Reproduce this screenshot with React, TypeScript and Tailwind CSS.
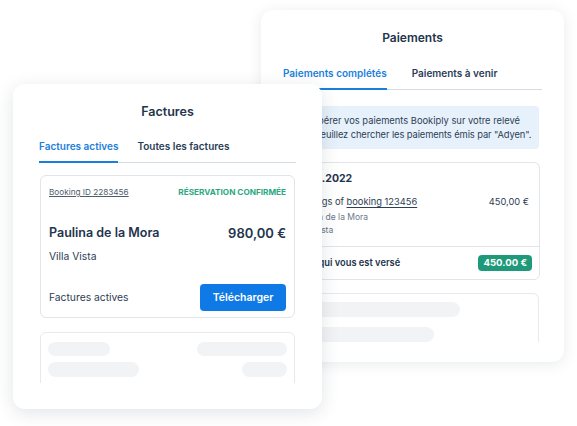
import React from "react";

export default function App() {
  return (
    <div
      className="relative w-[577px] h-[426px] bg-white overflow-hidden text-[#23344d] whitespace-nowrap"
      style={{ fontFamily: "Inter, 'Noto Sans', sans-serif" }}
    >
      {/* Back card: Paiements */}
      <div className="absolute left-[261px] top-[10px] w-[303px] h-[352px] rounded-[12px] bg-white shadow-[0_2px_14px_rgba(30,45,70,0.10)] flex flex-col px-[22px] pt-[20px]">
        <div className="text-center text-[12px] font-semibold leading-[16px]">Paiements</div>
        <div className="mt-[21px] flex border-b border-[#d5dbe3] text-[10px] font-semibold leading-[13px]">
          <div className="pb-[8px] text-[#1a7fdc] border-b-2 border-[#1a7fdc] -mb-px">
            Paiements complétés
          </div>
          <div className="pb-[8px] ml-[25px] text-[#2a3d57]">Paiements à venir</div>
        </div>
        <div className="mt-[16px] -ml-[14px] mr-[3px] h-[43px] rounded-[4px] bg-[#e7f1fb] pt-[8px] text-[9.35px] leading-[14px] text-[#2d3e55]">
          <div className="pl-[17px]">Pour repérer vos paiements Bookiply sur votre relevé</div>
          <div className="pl-[4px] tracking-[-0.1px]">bancaire, veuillez chercher les paiements émis par "Adyen".</div>
        </div>
        <div className="mt-[13px] mr-[2px] rounded-[6px] border border-[#e1e5ea]">
          <div className="px-[10px] pt-[9px] pb-[9px]">
            <div className="text-[10.5px] font-bold leading-[14px]">15.06.2022</div>
            <div className="mt-[9px] flex text-[9.3px] leading-[13px] text-[#2d3e55]">
              <span>
                Earnings of <span className="underline underline-offset-2">booking 123456</span>
              </span>
              <span className="ml-auto">450,00 €</span>
            </div>
            <div className="mt-[3px] text-[8.5px] leading-[13px] text-[#6a7888]">Paulina de la Mora</div>
            <div className="text-[8.5px] leading-[13px] text-[#6a7888]">Villa Vista</div>
          </div>
          <div className="border-t border-[#e1e5ea] flex items-center h-[33px] pl-[10px] pr-[7px]">
            <span className="text-[9.3px] font-semibold">Total qui vous est versé</span>
            <span className="ml-auto h-[16px] px-[5px] rounded-[4px] bg-[#1e9a7a] text-white text-[9.6px] font-bold leading-[16px]">
              450.00 €
            </span>
          </div>
        </div>
        <div className="mt-[13px] h-[49px] overflow-hidden mr-[3px]">
          <div className="h-[80px] rounded-[6px] border border-[#e6e9ee] px-[10px] pt-[8px] flex flex-col gap-[10px]">
            <div className="h-[15px] w-[166px] rounded-full bg-[#f2f3f5]" />
            <div className="h-[15px] w-[140px] rounded-full bg-[#f2f3f5]" />
          </div>
        </div>
      </div>

      {/* Front card: Factures */}
      <div className="absolute left-[13px] top-[84px] w-[309px] h-[325px] rounded-[12px] bg-white shadow-[0_4px_18px_rgba(30,45,70,0.13)] flex flex-col px-[26px] pt-[20px]">
        <div className="text-center text-[12.5px] font-semibold leading-[16px]">Factures</div>
        <div className="mt-[20px] flex border-b border-[#d5dbe3] text-[10px] font-semibold leading-[13px]">
          <div className="pb-[8px] text-[#1a7fdc] border-b-2 border-[#1a7fdc] -mb-px">
            Factures actives
          </div>
          <div className="pb-[8px] ml-[19px] text-[#2a3d57]">Toutes les factures</div>
        </div>
        <div className="mt-[12px] mx-[1px] h-[143px] rounded-[6px] border border-[#e1e5ea] px-[8px] pt-[10px] pb-[6px] flex flex-col">
          <div className="flex items-center text-[8.2px] leading-[12px]">
            <span className="underline underline-offset-1 text-[#4d5d70]">Booking ID 2283456</span>
            <span className="ml-auto font-bold text-[#2aa882]">RÉSERVATION CONFIRMÉE</span>
          </div>
          <div className="mt-[26px] flex items-center leading-[18px]">
            <span className="text-[12.5px] font-semibold">Paulina de la Mora</span>
            <span className="ml-auto text-[13px] font-semibold">980,00 €</span>
          </div>
          <div className="mt-[7px] text-[10.3px] leading-[14px] text-[#2d3e55]">Villa Vista</div>
          <div className="mt-auto flex items-center">
            <span className="text-[10.3px] text-[#2d3e55]">Factures actives</span>
            <span className="ml-auto w-[86px] h-[27px] rounded-[4px] bg-[#0f7ae5] text-white text-[10.5px] font-semibold flex items-center justify-center">
              Télécharger
            </span>
          </div>
        </div>
        <div className="mt-[14px] mx-[1px] h-[51px] overflow-hidden">
          <div className="h-[80px] rounded-[6px] border border-[#e6e9ee] px-[7px] pt-[9px] flex flex-col gap-[6px]">
            <div className="flex">
              <div className="h-[14px] w-[62px] rounded-full bg-[#f2f3f5]" />
              <div className="ml-auto h-[14px] w-[90px] rounded-full bg-[#f2f3f5]" />
            </div>
            <div className="flex">
              <div className="h-[15px] w-[91px] rounded-full bg-[#f2f3f5]" />
              <div className="ml-auto h-[15px] w-[45px] rounded-full bg-[#f2f3f5]" />
            </div>
          </div>
        </div>
      </div>
    </div>
  );
}
